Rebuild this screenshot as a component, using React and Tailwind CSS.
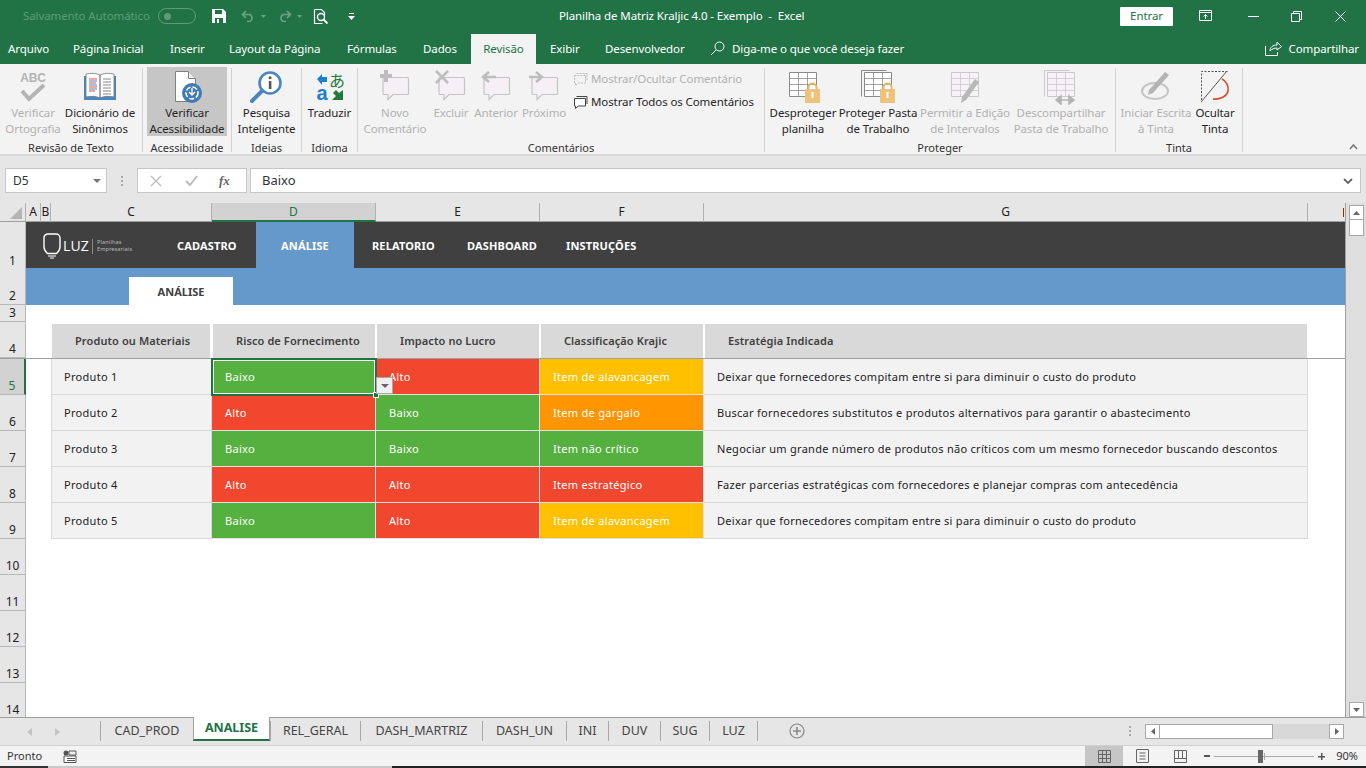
import React from "react";

const FONT = "font-['Noto_Sans','Open_Sans',sans-serif]";
const UI_TEXT = "text-[11.5px] tracking-[-0.1px]";

// ---------------------------
// ICONS
// ---------------------------
const Svg = ({ w = 36, h = 36, children, className = "" }) => (
  <svg width={w} height={h} viewBox={`0 0 ${w} ${h}`} fill="none" className={className}>
    {children}
  </svg>
);

const SpellIcon = () => (
  <Svg>
    <text x="18" y="13" textAnchor="middle" fontSize="12" fontWeight="600" fill="#b4b4b4" fontFamily="Liberation Sans">ABC</text>
    <path d="M7 22l7 8L29 16" stroke="#b4b4b4" strokeWidth="4" />
  </Svg>
);

const BookIcon = () => (
  <Svg>
    <path d="M2 7h32v24H2z" fill="#4a86c0" />
    <path d="M4 5c5-1 10-1 14 1v23c-4-2-9-2-14-1zM32 5c-5-1-10-1-14 1v23c4-2 9-2 14-1z" fill="#fff" stroke="#777" strokeWidth="0.8" />
    <path d="M7 10h8M7 14h7M7 18h8M7 22h6" stroke="#d9534f" strokeWidth="1" />
    <path d="M7 12h8M7 16h8M7 20h8" stroke="#4a86c0" strokeWidth="1" />
    <path d="M21 10h8M21 13h8M21 16h8M21 19h8M21 22h8M21 25h8" stroke="#888" strokeWidth="1" />
  </Svg>
);

const AccessIcon = () => (
  <Svg>
    <path d="M6.5 2.5h13l7 7v23h-20z" fill="#fff" stroke="#7f7f7f" />
    <path d="M19.5 2.5v7h7" fill="#eee" stroke="#7f7f7f" />
    <circle cx="23" cy="24" r="10" fill="#3f7cb5" />
    <circle cx="23" cy="24" r="6" stroke="#fff" strokeWidth="1.6" strokeDasharray="5 2" />
    <path d="M23 19v6M20 23l3 3 3-3" stroke="#fff" strokeWidth="1.3" />
  </Svg>
);

const SmartIcon = () => (
  <Svg>
    <circle cx="21" cy="14" r="10.5" fill="#fff" stroke="#4a86c0" strokeWidth="2.6" />
    <rect x="19.8" y="12" width="2.6" height="8" fill="#555" />
    <rect x="19.8" y="7.5" width="2.6" height="2.6" fill="#555" />
    <path d="M13 22L3 32" stroke="#4a86c0" strokeWidth="4" strokeLinecap="round" />
  </Svg>
);

const TranslateIcon = () => (
  <svg width="36" height="36" viewBox="0 0 36 36" fill="none" className="overflow-visible">
    <path d="M5 10l5-5v3h5v5l-5 0v3z" fill="#1e7fd0" />
    <text x="25" y="18" textAnchor="middle" fontSize="16" fill="#217a3c" fontFamily="Noto Sans CJK JP">あ</text>
    <text x="10" y="31" textAnchor="middle" fontSize="20" fontWeight="600" fill="#1e7fd0" fontFamily="Liberation Sans">a</text>
    <path d="M31 21v10H20l4-4-3-3 3-3 3 3z" fill="#217a3c" />
  </svg>
);

const Bubble = ({ mark }) => (
  <Svg w={36}>
    <path d="M7 8.5h23.5a1 1 0 011 1v15a1 1 0 01-1 1H16l-5 5v-5H7a1 1 0 01-1-1v-15a1 1 0 011-1z" fill="#f6f0f6" stroke="#c4c4c4" strokeWidth="1.2" />
    {mark === "plus" && <path d="M9 1v12M3 7h12" stroke="#bdbdbd" strokeWidth="4" />}
    {mark === "x" && <path d="M3 2l12 12M15 2L3 14" stroke="#bdbdbd" strokeWidth="2.6" />}
    {mark === "left" && <path d="M18 8H6M11 3L5 8l6 5" stroke="#bdbdbd" strokeWidth="2.6" />}
    {mark === "right" && <path d="M3 8h12M10 3l6 5-6 5" stroke="#bdbdbd" strokeWidth="2.6" />}
  </Svg>
);

const SmallBubble = ({ disabled }) => (
  <svg width="15" height="14" viewBox="0 0 15 14" fill="none">
    <path d="M1.5 3.5h11v7.5H5.5l-3 2.5V11h-1z" fill={disabled ? "none" : "#fff"} stroke={disabled ? "#bdbdbd" : "#444"} strokeDasharray={disabled ? "2 1" : undefined} />
    <path d="M3.5 1.5h10.5v7.5" stroke={disabled ? "#bdbdbd" : "#444"} strokeDasharray={disabled ? "2 1" : undefined} />
  </svg>
);

const SheetGrid = ({ stroke = "#8a8a8a", fill = "#fff" }) => (
  <>
    <path d="M4.5 3.5h27v24h-27z" fill={fill} stroke={stroke} />
    <path d="M4.5 9.5h27M4.5 15.5h27M4.5 21.5h27M13.5 3.5v24M22.5 3.5v24" stroke={stroke} strokeWidth="0.8" />
  </>
);

const Lock = () => (
  <>
    <path d="M23.500 21v-2.500a4 4 0 018 0V21" stroke="#e2b766" strokeWidth="2" />
    <rect x="20" y="20" width="15" height="14" fill="#eec27a" />
    <rect x="26.500" y="23" width="2" height="6" fill="#fff" />
  </>
);

const ProtectSheet = () => (
  <Svg>
    <SheetGrid />
    <Lock />
  </Svg>
);

const ProtectBook = () => (
  <Svg>
    <path d="M1.5 1.5h25" stroke="#8a8a8a" />
    <path d="M1.5 1.5v26" stroke="#8a8a8a" />
    <SheetGrid />
    <Lock />
  </Svg>
);

const AllowEdit = () => (
  <Svg>
    <SheetGrid stroke="#c9c9c9" fill="#f7f2f7" />
    <path d="M32 13L19 31l-5 3 1-6 13-18z" fill="#b8b8b8" />
  </Svg>
);

const Unshare = () => (
  <Svg>
    <path d="M1.5 1.5h25M1.5 1.5v26" stroke="#c9c9c9" />
    <SheetGrid stroke="#c9c9c9" fill="#f7f2f7" />
    <path d="M13 31h18M13 31l5-4v8zM31 31l-5-4v8z" stroke="#b4b4b4" strokeWidth="1.6" fill="#b4b4b4" />
  </Svg>
);

const InkStart = () => (
  <Svg>
    <ellipse cx="17" cy="22" rx="13" ry="8" stroke="#c4c4c4" strokeWidth="2" />
    <path d="M31 6l-16 18-5 2 1-5L27 3z" fill="#b4b4b4" />
  </Svg>
);

const InkHide = () => (
  <Svg>
    <path d="M4.5 31V2.5h26" stroke="#555" strokeDasharray="2 1.5" />
    <path d="M4 33L30 2" stroke="#555" />
    <path d="M25 10c4 2 7 7 6 12-1 5-8 9-15 8" stroke="#d9482f" strokeWidth="1.6" />
  </Svg>
);

// ---------------------------
// TITLE BAR
// ---------------------------
const TitleBar = () => (
  <div className="h-8 bg-[#217346] flex items-center text-white relative">
    <span className={`ml-[23px] w-[135px] ${UI_TEXT} text-[#5d9c7a] whitespace-nowrap`}>Salvamento Automático</span>
    <div className="w-[38px] h-4 rounded-full border border-[#5d9c7a] flex items-center pl-[5px]">
      <span className="w-[7px] h-[7px] rounded-full bg-[#5d9c7a]" />
    </div>
    <svg width="14" height="14" viewBox="0 0 14 14" className="ml-[16px]">
      <path d="M0 0h11l3 3v11H0z" fill="#fff" />
      <path d="M3 1h7v4H3z" fill="#217346" />
      <path d="M3 9h8v5H3z" fill="#217346" />
      <path d="M5 10h2v4H5z" fill="#fff" />
    </svg>
    <svg width="26" height="12" viewBox="0 0 26 12" fill="none" className="ml-[15px]">
      <path d="M2 4.5h7a4 4 0 010 7H6M5 1L1.5 4.5 5 8" stroke="#6aa587" strokeWidth="1.6" />
      <path d="M20 5l2.5 3L25 5z" fill="#6aa587" />
    </svg>
    <svg width="26" height="12" viewBox="0 0 26 12" fill="none" className="ml-[10px]">
      <path d="M13 4.5H6a4 4 0 000 7h3M10 1l3.5 3.5L10 8" stroke="#6aa587" strokeWidth="1.6" />
      <path d="M20 5l2.5 3L25 5z" fill="#6aa587" />
    </svg>
    <svg width="16" height="17" viewBox="0 0 16 17" fill="none" className="ml-[10px]">
      <path d="M1.5 1.5h7l3 3v3M1.5 1.5v14h8" stroke="#fff" strokeWidth="1.2" />
      <circle cx="8" cy="9" r="3.5" stroke="#fff" strokeWidth="1.4" />
      <path d="M10.5 11.5l4 4" stroke="#fff" strokeWidth="1.8" />
    </svg>
    <svg width="7" height="7" viewBox="0 0 7 7" className="ml-[19px]">
      <path d="M1 0h5v1H1zM0 3h7L3.5 7z" fill="#fff" />
    </svg>
    <span className={`absolute left-[559px] ${UI_TEXT} whitespace-pre`}>Planilha de Matriz Kraljic 4.0 - Exemplo  -  Excel</span>
    <div className="ml-auto flex items-center">
      <button className={`w-[53px] h-[19px] bg-white text-[#217346] ${UI_TEXT} rounded-[1px] flex items-center justify-center`}>Entrar</button>
      <svg width="14" height="12" viewBox="0 0 14 12" fill="none" className="ml-[26px]">
        <path d="M.5.5h12v10H.5zM.5 2.5h12M6.5 9V4.5M4.5 6.5l2-2 2 2" stroke="#fff" />
      </svg>
      <span className="ml-[35px] w-[11px] h-px bg-white" />
      <svg width="11" height="11" viewBox="0 0 11 11" fill="none" className="ml-[32px]">
        <path d="M.5 2.5h8v8h-8zM2.5 2.5v-2h8v8h-2" stroke="#fff" />
      </svg>
      <svg width="11" height="11" viewBox="0 0 11 11" fill="none" className="ml-[33px] mr-[20px]">
        <path d="M.5.5l10 10M10.5.5l-10 10" stroke="#fff" />
      </svg>
    </div>
  </div>
);

const tabs = [
  ["Arquivo", "w-[65px]"],
  ["Página Inicial", "w-[97px]"],
  ["Inserir", "w-[59px]"],
  ["Layout da Página", "w-[118px]"],
  ["Fórmulas", "w-[76px]"],
  ["Dados", "w-[48px]"],
];

const TabBar = () => (
  <div className={`h-8 bg-[#217346] flex text-white ${UI_TEXT} pl-2`}>
    {tabs.map(([label, w]) => (
      <div key={label} className={`${w} pt-[8px] whitespace-nowrap`}>{label}</div>
    ))}
    <div className="w-[65px] mt-[2px] bg-[#f3f3f3] text-[#217346] text-center pt-[6px]">Revisão</div>
    <div className="w-[69px] pl-[14px] pt-[8px]">Exibir</div>
    <div className="w-[105px] pt-[8px] whitespace-nowrap">Desenvolvedor</div>
    <svg width="15" height="15" viewBox="0 0 15 15" fill="none" className="mt-[9px]">
      <circle cx="9.5" cy="5.5" r="4.5" stroke="#fff" />
      <path d="M6 9l-5 5" stroke="#fff" />
    </svg>
    <div className="ml-[7px] pt-[8px] whitespace-nowrap">Diga-me o que você deseja fazer</div>
    <div className="ml-auto flex pr-[7px]">
      <svg width="17" height="15" viewBox="0 0 17 15" fill="none" className="mt-[9px]">
        <path d="M.5 5v9.5h12V11M5 10c0-4 3-6 7-6V1l4.5 4.5L12 9V7c-3 0-5 1-7 3z" stroke="#fff" />
      </svg>
      <div className="ml-[7px] pt-[8px]">Compartilhar</div>
    </div>
  </div>
);

// ---------------------------
// RIBBON
// ---------------------------
const RibbonBtn = ({ icon, lines, w, disabled, active }) => (
  <div className={`${w} h-[69px] flex flex-col items-center ${UI_TEXT} leading-[16px] whitespace-nowrap ${disabled ? "text-[#b1b1b1]" : "text-[#262626]"} ${active ? "bg-[#c6c6c6]" : ""}`}>
    <div className="h-[38px] pt-[2px] flex justify-center shrink-0">{icon}</div>
    {lines.map((l) => (
      <span key={l}>{l}</span>
    ))}
  </div>
);

const Group = ({ w, label, children, pad = "" }) => (
  <div className={`${w} h-full flex shrink-0`}>
    <div className="flex-1 min-w-0 flex flex-col">
      <div className={`flex-1 flex pt-[3px] ${pad}`}>{children}</div>
      <div className="h-[15px] text-center text-[11px] leading-[18px] text-[#333]">{label}</div>
    </div>
    <span className="w-px mt-1 mb-[2px] bg-[#d2d2d2]" />
  </div>
);

const Ribbon = () => (
  <div className="h-[92px] bg-[#f3f3f3] border-b-2 border-[#d8d8d8] flex relative">
    <Group w="w-[143px]" label="Revisão de Texto">
      <RibbonBtn w="w-[66px]" icon={<SpellIcon />} lines={["Verificar", "Ortografia"]} disabled />
      <RibbonBtn w="w-[68px]" icon={<BookIcon />} lines={["Dicionário de", "Sinônimos"]} />
    </Group>
    <Group w="w-[89px]" label="Acessibilidade" pad="pl-1">
      <RibbonBtn w="w-[80px]" icon={<AccessIcon />} lines={["Verificar", "Acessibilidade"]} active />
    </Group>
    <Group w="w-[70px]" label="Ideias">
      <RibbonBtn w="w-[69px]" icon={<SmartIcon />} lines={["Pesquisa", "Inteligente"]} />
    </Group>
    <Group w="w-[56px]" label="Idioma">
      <RibbonBtn w="w-[55px]" icon={<TranslateIcon />} lines={["Traduzir"]} />
    </Group>
    <Group w="w-[407px]" label="Comentários">
      <RibbonBtn w="w-[74px]" icon={<Bubble mark="plus" />} lines={["Novo", "Comentário"]} disabled />
      <RibbonBtn w="w-[38px]" icon={<Bubble mark="x" />} lines={["Excluir"]} disabled />
      <RibbonBtn w="w-[52px]" icon={<Bubble mark="left" />} lines={["Anterior"]} disabled />
      <RibbonBtn w="w-[44px]" icon={<Bubble mark="right" />} lines={["Próximo"]} disabled />
      <div className={`ml-[7px] flex flex-col ${UI_TEXT} whitespace-nowrap`}>
        <div className="h-[23px] flex items-center gap-[3px] text-[#b1b1b1]">
          <SmallBubble disabled /> Mostrar/Ocultar Comentário
        </div>
        <div className="h-[23px] flex items-center gap-[3px] text-[#262626]">
          <SmallBubble /> Mostrar Todos os Comentários
        </div>
      </div>
    </Group>
    <Group w="w-[351px]" label="Proteger">
      <RibbonBtn w="w-[76px]" icon={<ProtectSheet />} lines={["Desproteger", "planilha"]} />
      <RibbonBtn w="w-[74px]" icon={<ProtectBook />} lines={["Proteger Pasta", "de Trabalho"]} />
      <RibbonBtn w="w-[100px]" icon={<AllowEdit />} lines={["Permitir a Edição", "de Intervalos"]} disabled />
      <RibbonBtn w="w-[92px]" icon={<Unshare />} lines={["Descompartilhar", "Pasta de Trabalho"]} disabled />
    </Group>
    <Group w="w-[127px]" label="Tinta">
      <RibbonBtn w="w-[80px]" icon={<InkStart />} lines={["Iniciar Escrita", "à Tinta"]} disabled />
      <RibbonBtn w="w-[38px]" icon={<InkHide />} lines={["Ocultar", "Tinta"]} />
    </Group>
    <svg width="9" height="6" viewBox="0 0 9 6" fill="none" className="absolute right-[8px] bottom-[4px]">
      <path d="M1 5l3.5-4L8 5" stroke="#777" strokeWidth="1.6" />
    </svg>
  </div>
);

// ---------------------------
// FORMULA BAR
// ---------------------------
const FormulaBar = () => (
  <div className="h-[47px] bg-[#e6e6e6] flex pt-3 pl-[5px] pr-[5px]">
    <div className="w-[102px] h-[25px] bg-white border border-[#c6c6c6] flex items-center pl-[7px] pr-[5px] text-[12px] text-[#333]">
      D5
      <svg width="8" height="4" viewBox="0 0 8 4" className="ml-auto"><path d="M0 0h8L4 4z" fill="#777" /></svg>
    </div>
    <div className="w-[30px] h-[25px] flex flex-col items-center justify-center gap-[2px]">
      <span className="w-[2px] h-[2px] bg-[#aaa]" />
      <span className="w-[2px] h-[2px] bg-[#aaa]" />
      <span className="w-[2px] h-[2px] bg-[#aaa]" />
    </div>
    <div className="w-[110px] h-[25px] bg-white border border-[#c6c6c6] flex items-center">
      <svg width="12" height="12" viewBox="0 0 12 12" fill="none" className="ml-3"><path d="M1 1l10 10M11 1L1 11" stroke="#bbb" strokeWidth="1.3" /></svg>
      <svg width="13" height="11" viewBox="0 0 13 11" fill="none" className="ml-[23px]"><path d="M1 6l4 4 7-9" stroke="#bbb" strokeWidth="2" /></svg>
      <span className="ml-[21px] text-[13px] italic font-['Liberation_Serif',serif] font-bold text-[#666]">fx</span>
    </div>
    <div className="ml-[3px] flex-1 h-[25px] bg-white border border-[#c6c6c6] flex items-center pl-[11px] pr-[7px] text-[13px] text-[#333]">
      Baixo
      <svg width="10" height="6" viewBox="0 0 10 6" fill="none" className="ml-auto"><path d="M1 1l4 4 4-4" stroke="#666" strokeWidth="1.8" /></svg>
    </div>
  </div>
);

// ---------------------------
// SHEET
// ---------------------------
const COLS = "grid grid-cols-[26px_15px_10px_161px_164px_164px_164px_604px_37px]";

const ColHead = ({ children, active }) => (
  <div className={`h-[19px] border-r border-[#b0b0b0] text-center text-[12px] leading-[18px] ${active ? "bg-[#d2d2d2] border-b-2 !border-b-[#217346] text-[#217346]" : "text-[#222]"}`}>
    {children}
  </div>
);

const RowNum = ({ n, active }) => (
  <div className={`h-full flex items-end justify-center border-r border-b border-[#b8b8b8] text-[12px] leading-[16px] ${active ? "bg-[#d2d2d2] text-[#217346] border-r-2 border-r-[#217346]" : "bg-[#e6e6e6] text-[#222]"}`}>
    {n}
  </div>
);

const colors = {
  green: "bg-[#55b03f]",
  red: "bg-[#f2472f]",
  yellow: "bg-[#ffc000]",
  orange: "bg-[#ff9500]",
};

const rows = [
  { n: 5, name: "Produto 1", a: ["Baixo", "green"], b: ["Alto", "red"], c: ["Item de alavancagem", "yellow"], d: "Deixar que fornecedores compitam entre si para diminuir o custo do produto" },
  { n: 6, name: "Produto 2", a: ["Alto", "red"], b: ["Baixo", "green"], c: ["Item de gargalo", "orange"], d: "Buscar fornecedores substitutos e produtos alternativos para garantir o abastecimento" },
  { n: 7, name: "Produto 3", a: ["Baixo", "green"], b: ["Baixo", "green"], c: ["Item não crítico", "green"], d: "Negociar um grande número de produtos não críticos com um mesmo fornecedor buscando descontos" },
  { n: 8, name: "Produto 4", a: ["Alto", "red"], b: ["Alto", "red"], c: ["Item estratégico", "red"], d: "Fazer parcerias estratégicas com fornecedores e planejar compras com antecedência" },
  { n: 9, name: "Produto 5", a: ["Baixo", "green"], b: ["Alto", "red"], c: ["Item de alavancagem", "yellow"], d: "Deixar que fornecedores compitam entre si para diminuir o custo do produto" },
];

const Cell = ({ label, color }) => (
  <div className={`${colors[color]} h-full border-r border-b border-[#e2e2e2] flex items-center pl-[13px] pt-[2px] text-[11px] text-white tracking-[0.3px]`}>
    {label}
  </div>
);

const HeadCell = ({ children, className = "" }) => (
  <div className={`h-[34px] mt-[2px] bg-[#d9d9d9] flex items-center pl-[23px] text-[11px] font-semibold text-[#404040] tracking-[0.1px] whitespace-nowrap ${className}`}>
    {children}
  </div>
);

const Logo = () => (
  <div className="flex items-center text-white ml-[16px] w-[135px] font-normal">
    <svg width="20" height="26" viewBox="0 0 20 26" fill="none" className="shrink-0">
      <path d="M5 1h9a4 4 0 014 4v9c0 3-2 5-3.500 6.500H5.500C4 19 2 17 2 14V5a4 4 0 013-4z" stroke="#fff" strokeWidth="1.4" />
      <path d="M6 23h8M8 25h4" stroke="#fff" />
    </svg>
    <span className="ml-[1px] text-[14px] leading-none font-['Open_Sans',sans-serif]">LUZ</span>
    <span className="w-px h-[15px] bg-[#888] ml-[3px]" />
    <span className="ml-1 text-[5.5px] leading-[7px] text-[#bbb]">Planilhas<br />Empresariais</span>
  </div>
);

const Sheet = () => (
  <div className="flex-1 flex overflow-hidden bg-white min-h-0">
    <div className="w-[1345px] overflow-hidden">
      {/* cabecalho das colunas */}
      <div className={`${COLS} h-[19px] bg-[#e6e6e6] border-b border-[#9f9f9f]`}>
        <div className="relative border-r border-[#b0b0b0]">
          <svg width="12" height="12" viewBox="0 0 12 12" className="absolute right-[3px] bottom-[3px]"><path d="M12 0v12H0z" fill="#b4b4b4" /></svg>
        </div>
        <ColHead>A</ColHead>
        <ColHead>B</ColHead>
        <ColHead>C</ColHead>
        <ColHead active>D</ColHead>
        <ColHead>E</ColHead>
        <ColHead>F</ColHead>
        <ColHead>G</ColHead>
        <div className="flex justify-end pr-[1px] pt-[5px]">
          <span className="w-px h-[9px] bg-[#7a3b00]" />
        </div>
      </div>

      {/* linha 1 */}
      <div className={`${COLS} h-[46px]`}>
        <RowNum n={1} />
        <div className="col-span-8 bg-[#404040] flex text-white text-[11px] font-bold tracking-[0.15px] whitespace-nowrap">
          <Logo />
          <div className="w-[79px] leading-[48px]">CADASTRO</div>
          <div className="w-[98px] bg-[#6598cb] leading-[48px] text-center">ANÁLISE</div>
          <div className="pl-[18px] w-[113px] leading-[48px]">RELATORIO</div>
          <div className="w-[99px] leading-[48px]">DASHBOARD</div>
          <div className="leading-[48px]">INSTRUÇÕES</div>
        </div>
      </div>

      {/* linha 2 */}
      <div className={`${COLS} h-[37px]`}>
        <RowNum n={2} />
        <div className="col-span-8 bg-[#6598cb] pl-[103px] pt-[9px]">
          <div className="w-[104px] h-[28px] pt-[2px] bg-white flex items-center justify-center text-[11px] font-bold text-[#404040]">ANÁLISE</div>
        </div>
      </div>

      {/* linha 3 */}
      <div className={`${COLS} h-[17px]`}>
        <RowNum n={3} />
      </div>

      {/* linha 4 */}
      <div className={`${COLS} h-[37px] border-b border-[#a0a0a0]`}>
        <RowNum n={4} />
        <div className="col-span-2" />
        <HeadCell className="ml-px mr-[2px]">Produto ou Materiais</HeadCell>
        <HeadCell className="ml-px mr-px">Risco de Fornecimento</HeadCell>
        <HeadCell className="ml-px mr-px">Impacto no Lucro</HeadCell>
        <HeadCell className="ml-px mr-px">Classificação Krajic</HeadCell>
        <HeadCell className="ml-px mr-px">Estratégia Indicada</HeadCell>
      </div>

      {/* linhas de dados */}
      {rows.map((r) => (
        <div key={r.n} className={`${COLS} h-[36px]`}>
          <RowNum n={r.n} active={r.n === 5} />
          <div className="col-span-2" />
          <div className="bg-[#f2f2f2] h-full border-l border-r border-b border-[#d9d9d9] flex items-center pl-[12px] pt-[2px] text-[11px] text-[#222] tracking-[0.3px]">{r.name}</div>
          <div className="relative h-full">
            <Cell label={r.a[0]} color={r.a[1]} />
            {r.n === 5 && (
              <>
                <div className="absolute -left-px -top-px -right-px -bottom-px border-2 border-[#217346] outline outline-1 -outline-offset-3 outline-white z-10" />
                <span className="absolute -right-[3px] -bottom-[3px] w-[6px] h-[6px] bg-[#217346] border border-white z-20" />
              </>
            )}
          </div>
          <div className="relative h-full">
            <Cell label={r.b[0]} color={r.b[1]} />
            {r.n === 5 && (
              <div className="absolute left-0 top-[18px] w-[17px] h-[17px] bg-[#f0f0f0] border border-[#a8a8a8] flex items-center justify-center z-20">
                <svg width="8" height="4" viewBox="0 0 8 4"><path d="M0 0h8L4 4z" fill="#666" /></svg>
              </div>
            )}
          </div>
          <Cell label={r.c[0]} color={r.c[1]} />
          <div className="bg-[#f2f2f2] h-full border-r border-b border-[#d9d9d9] flex items-center pl-[13px] pt-[2px] text-[11px] text-[#222] tracking-[0.28px] whitespace-nowrap">{r.d}</div>
        </div>
      ))}

      {/* linhas vazias */}
      {[10, 11, 12, 13, 14].map((n) => (
        <div key={n} className={`${COLS} h-[36px]`}>
          <RowNum n={n} />
        </div>
      ))}
    </div>

    {/* barra de rolagem */}
    <div className="w-[21px] bg-[#dedede] flex flex-col items-center pt-[2px] border-l border-[#a0a0a0]">
      <div className="w-[15px] h-[15px] bg-white border border-[#a8a8a8] flex items-center justify-center">
        <svg width="7" height="4" viewBox="0 0 7 4"><path d="M0 4h7L3.5 0z" fill="#666" /></svg>
      </div>
      <div className="w-[15px] h-[17px] -mt-px bg-white border border-[#a8a8a8]" />
      <div className="mt-auto w-[15px] h-[15px] bg-white border border-[#a8a8a8] flex items-center justify-center">
        <svg width="7" height="4" viewBox="0 0 7 4"><path d="M0 0h7L3.5 4z" fill="#666" /></svg>
      </div>
    </div>
  </div>
);

// ---------------------------
// SHEET TABS + STATUS
// ---------------------------
const sheetTabs = [
  ["CAD_PROD", "w-[94px]"],
  ["ANALISE", "w-[77px]"],
  ["REL_GERAL", "w-[91px]"],
  ["DASH_MARTRIZ", "w-[123px]"],
  ["DASH_UN", "w-[85px]"],
  ["INI", "w-[43px]"],
  ["DUV", "w-[53px]"],
  ["SUG", "w-[50px]"],
  ["LUZ", "w-[49px]"],
];

const SheetTabs = () => (
  <div className="h-[28px] bg-[#e6e6e6] border-t border-[#a0a0a0] flex">
    <div className="w-[100px] flex items-center pl-[27px] gap-[23px]">
      <svg width="5" height="8" viewBox="0 0 5 8"><path d="M5 0v8L0 4z" fill="#c4c4c4" /></svg>
      <svg width="5" height="8" viewBox="0 0 5 8"><path d="M0 0v8l5-4z" fill="#c4c4c4" /></svg>
    </div>
    {sheetTabs.map(([t, w]) =>
      t === "ANALISE" ? (
        <div key={t} className={`${w} h-[24px] -mt-px pt-[1px] bg-white border-x border-[#a0a0a0] border-b-2 !border-b-[#217346] text-[#217346] text-[12.5px] font-bold flex items-center justify-center`}>
          {t}
        </div>
      ) : (
        <div key={t} className={`${w} h-[20px] mt-[3px] border-l border-r border-[#a8a8a8] -mr-px text-[12.5px] text-[#444] flex items-center justify-center`}>
          {t}
        </div>
      )
    )}
    <svg width="16" height="16" viewBox="0 0 16 16" fill="none" className="ml-[32px] mt-[5px]">
      <circle cx="8" cy="8" r="7" stroke="#888" strokeWidth="1.2" />
      <path d="M8 4v8M4 8h8" stroke="#888" strokeWidth="1.6" />
    </svg>
    <div className="ml-auto flex items-center pr-[22px] h-[26px]">
      <div className="flex flex-col gap-[2px] mr-[14px]">
        <span className="w-[2px] h-[2px] bg-[#aaa]" />
        <span className="w-[2px] h-[2px] bg-[#aaa]" />
        <span className="w-[2px] h-[2px] bg-[#aaa]" />
      </div>
      <div className="w-[199px] h-[15px] bg-[#d8d8d8] flex items-center justify-between">
        <div className="flex h-full">
          <div className="w-[15px] bg-white border border-[#a8a8a8] flex items-center justify-center">
            <svg width="4" height="7" viewBox="0 0 4 7"><path d="M4 0v7L0 3.5z" fill="#666" /></svg>
          </div>
          <div className="w-[114px] bg-white border border-[#a8a8a8] -ml-px" />
        </div>
        <div className="w-[15px] h-full bg-white border border-[#a8a8a8] flex items-center justify-center">
          <svg width="4" height="7" viewBox="0 0 4 7"><path d="M0 0v7l4-3.5z" fill="#666" /></svg>
        </div>
      </div>
    </div>
  </div>
);

const StatusBar = () => (
  <div className="h-[21px] bg-[#f3f3f3] border-t border-[#d0d0d0] flex items-center text-[11px] text-[#333] pl-[7px]">
    Pronto
    <svg width="14" height="13" viewBox="0 0 14 13" fill="none" className="ml-[21px]">
      <circle cx="3" cy="3" r="2.5" fill="#555" />
      <path d="M1 6h12v6.5H1z" fill="#fff" stroke="#555" />
      <path d="M6 1h7v4H6zM4 8.5h8M4 10.5h8" stroke="#555" />
    </svg>
    <div className="ml-auto flex items-center h-full">
      <div className="w-[38px] h-full bg-[#c6c6c6] flex items-center justify-center">
        <svg width="13" height="13" viewBox="0 0 13 13" fill="none"><path d="M.5.5h12v12H.5zM.5 4.5h12M.5 8.5h12M4.5.5v12M8.5.5v12" stroke="#666" /></svg>
      </div>
      <svg width="13" height="14" viewBox="0 0 13 14" fill="none" className="ml-[13px]"><path d="M.5.5h12v13H.5zM3.5 4h6M3.5 7h6M3.5 10h6" stroke="#666" /></svg>
      <svg width="13" height="13" viewBox="0 0 13 13" fill="none" className="ml-[25px]"><path d="M.5.5h12v12H.5zM.5 8.5h12M4.5.5v8M8.5.5v8" stroke="#666" /></svg>
      <span className="ml-[17px] w-[6px] h-[2px] bg-[#555]" />
      <div className="relative ml-[4px] w-[100px] h-px bg-[#aaa]">
        <span className="absolute left-[50px] -top-[3px] w-px h-[7px] bg-[#aaa]" />
        <span className="absolute left-[44px] -top-[6px] w-[5px] h-[13px] bg-[#666]" />
      </div>
      <svg width="7" height="7" viewBox="0 0 7 7" className="ml-[4px]"><path d="M3 0h1.500v3H7v1.500H4.500V7H3V4.500H0V3h3z" fill="#555" /></svg>
      <span className="ml-[11px] mr-[8px] text-[11px]">90%</span>
    </div>
  </div>
);

export default function App() {
  return (
    <div className={`${FONT} w-[1366px] h-[768px] flex flex-col overflow-hidden bg-white`}>
      <TitleBar />
      <TabBar />
      <Ribbon />
      <FormulaBar />
      <Sheet />
      <SheetTabs />
      <StatusBar />
      <div className="h-[2px] shrink-0 flex">
        <div className="w-[48px] bg-[#333]" />
        <div className="w-[344px] bg-[#c8c8c8]" />
        <div className="flex-1 bg-[#222]" />
      </div>
    </div>
  );
}
